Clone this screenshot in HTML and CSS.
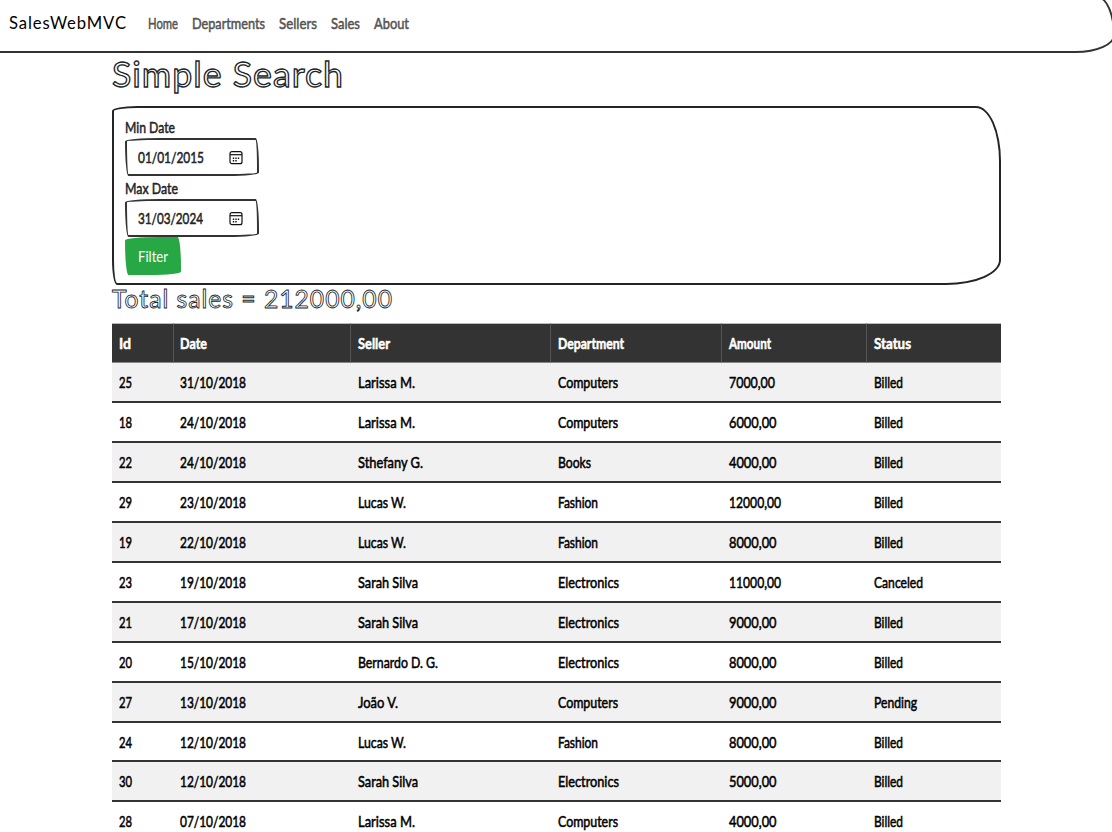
FILE: index.html
```html
<!DOCTYPE html>
<html lang="en">
<head>
<meta charset="utf-8">
<title>Simple Search - SalesWebMVC</title>
<link rel="stylesheet" href="styles.css">
</head>
<body>
<nav class="navbar">
  <a class="brand sketch"><span class="fit" data-w="118">SalesWebMVC</span></a>
  <a class="link"><span class="fit" data-w="30">Home</span></a>
  <a class="link"><span class="fit" data-w="73">Departments</span></a>
  <a class="link"><span class="fit" data-w="38">Sellers</span></a>
  <a class="link"><span class="fit" data-w="29">Sales</span></a>
  <a class="link"><span class="fit" data-w="35">About</span></a>
</nav>
<main class="container">
  <h1 class="sketch"><span class="fit" data-w="232">Simple Search</span></h1>
  <form class="panel">
    <label><span class="fit" data-w="50">Min Date</span></label>
    <div class="control"><span class="fit" data-w="66">01/01/2015</span>
      <svg class="cal" viewBox="0 0 14 14"><rect x="1" y=".7" width="12" height="12" rx="2"/><path d="M1 3.700h12"/><path class="dots" d="M6.300 7.200h1.400M8.800 7.200h1.400M3.800 7.200h1.400M3.800 9.700h1.400M6.300 9.700h1.400"/></svg>
    </div>
    <label><span class="fit" data-w="53">Max Date</span></label>
    <div class="control"><span class="fit" data-w="65">31/03/2024</span>
      <svg class="cal" viewBox="0 0 14 14"><rect x="1" y=".7" width="12" height="12" rx="2"/><path d="M1 3.700h12"/><path class="dots" d="M6.300 7.200h1.400M8.800 7.200h1.400M3.800 7.200h1.400M3.800 9.700h1.400M6.300 9.700h1.400"/></svg>
    </div>
    <button type="button" class="btn"><span class="fit" data-w="30">Filter</span></button>
  </form>
  <h3 class="sketch"><span class="fit" data-w="281">Total sales = 212000,00</span></h3>
  <table>
    <colgroup><col class="c1"><col class="c2"><col class="c3"><col class="c4"><col class="c5"><col class="c6"></colgroup>
    <thead><tr>
      <th><span class="fit" data-w="12">Id</span></th>
      <th><span class="fit" data-w="27">Date</span></th>
      <th><span class="fit" data-w="32">Seller</span></th>
      <th><span class="fit" data-w="66">Department</span></th>
      <th><span class="fit" data-w="42">Amount</span></th>
      <th><span class="fit" data-w="37">Status</span></th>
    </tr></thead>
    <tbody id="sales"></tbody>
  </table>
</main>
<script src="sales.js"></script>
</body>
</html>
```
FILE: styles.css
```css
* { box-sizing: border-box; }
body {
  margin: 0;
  height: 832px;
  overflow: hidden;
  background: #fff;
  color: #212529;
  font: 16px/24px Lato, "Liberation Sans", sans-serif;
}
.fit { display: inline-block; white-space: nowrap; transform-origin: left center; -webkit-text-stroke: .55px currentColor; }
.navbar {
  display: flex;
  align-items: center;
  height: 57px;
  margin: -4px -3px 0 -4px;
  padding: 0 11px 3px;
  border: 2px solid #333;
  border-radius: 25px 25px 55px 5px / 5px 55px 25px 25px;
}
.brand { font-size: 18px; line-height: 24px; color: #000; margin: -2px 21px 0 0; }
.link { color: #555; margin-right: 14px; }
.sketch { font-family: Lato, sans-serif; font-weight: 400; letter-spacing: 1px; }
.brand .fit { -webkit-text-stroke: 0; }
.container { width: 889px; margin-left: 112px; }
h1 { margin: 0; height: 53px; font-size: 35px; line-height: 41px; }
h1 .fit { color: #fff; font-weight: 400; -webkit-text-stroke: 1.3px #212529; }
h3 { margin: 0; height: 38px; font-size: 25px; line-height: 27px; }
h3 .fit { color: #fff; -webkit-text-stroke: .85px #212529; }
.panel {
  height: 179px;
  padding: 7px 11px;
  border: 2px solid #212529;
  border-radius: 25px 25px 55px 5px / 5px 55px 25px 25px;
}
label { display: block; height: 23px; line-height: 23px; }
.control {
  display: flex;
  align-items: center;
  justify-content: space-between;
  width: 134px;
  height: 38px;
  padding: 0 14px 0 11px;
  border: 2px solid #333;
  border-radius: 255px 25px 225px 25px / 25px 225px 25px 255px;
}
.cal { width: 14px; height: 14px; margin-top: 1px; fill: none; stroke: #111; stroke-width: 1.2; }
.cal .dots { stroke-width: 1.5; }
.btn {
  display: block;
  width: 56px;
  height: 38px;
  padding: 0 0 1px 13px;
  border: 0;
  border-radius: 255px 25px 225px 25px / 25px 225px 25px 255px;
  background: #28a745;
  color: #fff;
  font: inherit;
  text-align: left;
}
.btn .fit { -webkit-text-stroke: 0; }
table { width: 889px; table-layout: fixed; border-collapse: separate; border-spacing: 0; color: #000; }
.c1 { width: 62px; }
.c2 { width: 177px; }
.c3 { width: 200px; }
.c4 { width: 171px; }
.c5 { width: 145px; }
.c6 { width: 134px; }
th, td { height: 40px; padding: 0 7px 1px; text-align: left; line-height: 22px; border-bottom: 2px solid #333; }
th:nth-child(2), td:nth-child(2) { padding-left: 6px; }
th { background: #333; color: #fff; font-weight: 700; border-top: 1px solid #bbb; border-bottom: 1px solid #888; border-right: 1px solid #555; }
th:last-child { border-right: 0; }
tbody tr:nth-child(odd) { background: #f1f1f1; }
tbody tr:nth-child(10) td { height: 39px; padding-bottom: 0; }
```
FILE: sales.js
```js
const rows = [
  ["25", "31/10/2018", "Larissa M.", "Computers", "7000,00", "Billed"],
  ["18", "24/10/2018", "Larissa M.", "Computers", "6000,00", "Billed"],
  ["22", "24/10/2018", "Sthefany G.", "Books", "4000,00", "Billed"],
  ["29", "23/10/2018", "Lucas W.", "Fashion", "12000,00", "Billed"],
  ["19", "22/10/2018", "Lucas W.", "Fashion", "8000,00", "Billed"],
  ["23", "19/10/2018", "Sarah Silva", "Electronics", "11000,00", "Canceled"],
  ["21", "17/10/2018", "Sarah Silva", "Electronics", "9000,00", "Billed"],
  ["20", "15/10/2018", "Bernardo D. G.", "Electronics", "8000,00", "Billed"],
  ["27", "13/10/2018", "João V.", "Computers", "9000,00", "Pending"],
  ["24", "12/10/2018", "Lucas W.", "Fashion", "8000,00", "Billed"],
  ["30", "12/10/2018", "Sarah Silva", "Electronics", "5000,00", "Billed"],
  ["28", "07/10/2018", "Larissa M.", "Computers", "4000,00", "Billed"]
];

// Text widths in pixels, by value; the column default covers the rest.
const widths = {
  "Larissa M.": 57, "Sthefany G.": 65, "Lucas W.": 48, "Sarah Silva": 60,
  "Bernardo D. G.": 80, "João V.": 40, "Computers": 60, "Books": 33,
  "Fashion": 40, "Electronics": 61, "12000,00": 52, "11000,00": 52,
  "7000,00": 46, "Canceled": 49, "Pending": 43
};
const columnWidths = [13, 66, 60, 60, 47.5, 29];

const body = document.getElementById("sales");
for (const row of rows) {
  const tr = body.insertRow();
  row.forEach((value, i) => {
    const span = document.createElement("span");
    span.className = "fit";
    span.textContent = value;
    span.dataset.w = widths[value] || columnWidths[i];
    tr.insertCell().append(span);
  });
}

// Condense each text to its width and give back the space it saves.
for (const el of document.querySelectorAll(".fit")) {
  const natural = el.getBoundingClientRect().width;
  const target = Number(el.dataset.w);
  el.style.transform = `scaleX(${target / natural})`;
  el.style.marginRight = `${target - natural}px`;
}
```
